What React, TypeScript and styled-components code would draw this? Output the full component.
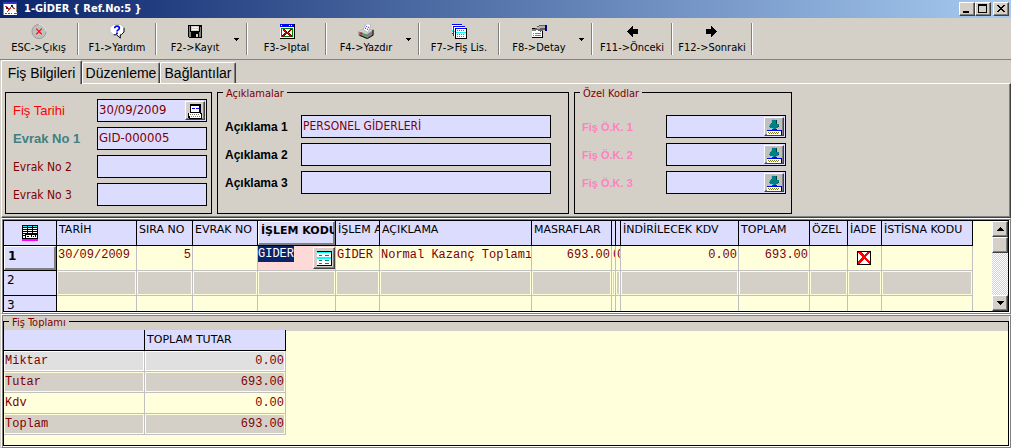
import React from "react";
import styled, { createGlobalStyle, css } from "styled-components";

const ui = '"DejaVu Sans Condensed", "DejaVu Sans", sans-serif';
const wide = '"DejaVu Sans", sans-serif';
const arial = '"Liberation Sans", sans-serif';
const mono = '"Liberation Mono", monospace';

const face = "#d4d0c8";
const lilac = "#dcdcff";
const cream = "#ffffdc";
const maroon = "#800000";

const GlobalStyle = createGlobalStyle`
  *, *::before, *::after { box-sizing: border-box; }
  body { margin: 0; background: ${face}; }
  button, input { margin: 0; padding: 0; border: 0; border-radius: 0; font: inherit; color: inherit; }
  table { border-collapse: separate; border-spacing: 0; table-layout: fixed; }
`;

const raised = css`
  background: ${face};
  border: 1px solid;
  border-color: #fff #404040 #404040 #fff;
  box-shadow: inset -1px -1px 0 #808080;
`;

const Window = styled.div`
  display: flex;
  flex-direction: column;
  min-height: 100vh;
  font: 11px/14px ${ui};
  color: #000;
`;

/* title bar */
const TitleBar = styled.header`
  display: flex;
  align-items: center;
  height: 18px;
  padding: 0 2px 0 3px;
  background: linear-gradient(90deg, #0a246a, #a6caf0);
`;
const Title = styled.h1`
  flex: 1;
  margin: 0 0 0 5px;
  color: #fff;
  font: bold 11px/16px ${ui};
  white-space: nowrap;
`;
const CaptionButton = styled.button<{ $apart?: boolean }>`
  ${raised}
  display: flex;
  width: 16px;
  height: 14px;
  margin-left: ${(p) => (p.$apart ? 2 : 0)}px;
`;

/* tool bar */
const ToolBar = styled.nav`
  display: flex;
  height: 42px;
  border-bottom: 1px solid #808080;
`;
const ToolGroup = styled.div`
  display: flex;
  height: 32px;
  margin-top: 5px;
  border-right: 1px solid #fff;
  box-shadow: inset -1px 0 0 #808080;
  padding-right: 1px;
`;
const ToolButton = styled.button<{ $w: number }>`
  display: flex;
  flex-direction: column;
  align-items: center;
  gap: 2px;
  width: ${(p) => p.$w}px;
  padding-top: 1px;
  background: none;
  white-space: nowrap;
`;
const DropButton = styled.button`
  display: flex;
  align-items: center;
  justify-content: flex-start;
  width: 13px;
  padding-left: 1px;
  background: none;
`;

/* tabs */
const TabList = styled.div`
  display: flex;
  align-items: flex-end;
  height: 23px;
  padding-left: 1px;
  font: 14px/18px ${arial};
`;
const Tab = styled.button<{ $active?: boolean; $w: number }>`
  position: relative;
  width: ${(p) => p.$w}px;
  height: ${(p) => (p.$active ? 24 : 21)}px;
  margin-bottom: ${(p) => (p.$active ? -1 : 0)}px;
  background: ${face};
  border: solid;
  border-width: 1px 1px 0 1px;
  border-color: #fff #404040 #fff #fff;
  border-radius: 2px 2px 0 0;
  box-shadow: inset -1px 0 0 #808080;
  white-space: nowrap;
  z-index: ${(p) => (p.$active ? 1 : 0)};
`;

const TabPage = styled.section`
  display: flex;
  gap: 5px;
  margin-left: 1px;
  padding: 8px 0 3px 3px;
  border: 1px solid;
  border-color: #fff #404040 #404040 #fff;
  box-shadow: inset -1px -1px 0 #808080;
`;
const Group = styled.fieldset<{ $w: number; $top: number }>`
  position: relative;
  display: flex;
  flex-direction: column;
  gap: 5px;
  width: ${(p) => p.$w}px;
  min-width: 0;
  margin: 0;
  padding: ${(p) => p.$top}px 5px 7px 7px;
  border: 1px solid #000;
`;
const Legend = styled.legend`
  position: absolute;
  top: -6px;
  left: 5px;
  padding: 0 3px;
  background: ${face};
  color: ${maroon};
`;
const Field = styled.div`
  display: flex;
  align-items: center;
`;
const FieldLabel = styled.label<{ $tone: string; $w: number; $arial?: boolean; $bold?: boolean; $size?: number }>`
  flex: none;
  width: ${(p) => p.$w}px;
  color: ${(p) => p.$tone};
  font: ${(p) => (p.$bold ? "bold " : "")}${(p) => p.$size || 12}px/16px ${(p) => (p.$arial ? arial : ui)};
  white-space: nowrap;
`;
const FieldBox = styled.div<{ $w: number }>`
  display: flex;
  width: ${(p) => p.$w}px;
  height: 23px;
  padding: 1px;
  background: ${lilac};
  border: 1px solid #000;
`;
const FieldInput = styled.input<{ $size?: number }>`
  flex: 1;
  min-width: 0;
  padding-bottom: 2px;
  background: none;
  color: ${maroon};
  font: ${(p) => p.$size || 13}px/16px ${ui};
  outline: none;
`;
const PickButton = styled.button<{ $grey?: boolean }>`
  ${raised}
  display: flex;
  align-items: center;
  justify-content: center;
  flex: none;
  width: 20px;
  height: 19px;
  ${(p) => p.$grey && "background: #c0c0c0;"}
`;

/* sunken frames round the grids */
const Frame = styled.section<{ $grow?: boolean }>`
  display: flex;
  flex-direction: column;
  flex: ${(p) => (p.$grow ? "1 0 auto" : "none")};
  margin-left: 1px;
  padding: 1px;
  border: 1px solid;
  border-color: #fff #808080 #808080 #fff;
  box-shadow: inset 1px 1px 0 #808080, inset -1px -1px 0 #fff;
`;
const GridView = styled.div`
  display: flex;
  justify-content: space-between;
  height: 92px;
  overflow: hidden;
  background: ${cream};
  border: 1px solid #000;
`;
const EntryTable = styled.table`
  flex: none;
  width: 969px;
  height: 100px;
  color: ${maroon};
  font: 12px/14px ${mono};
  td, th { padding: 0; height: 25px; overflow: hidden; vertical-align: top; text-align: left; font-weight: normal; white-space: nowrap; }
`;
const HeadCell = styled.th`
  background: ${lilac};
  color: #000;
  font: 11px/18px ${wide};
  border-right: 1px solid #000;
  border-bottom: 1px solid #000;
`;
const HeadText = styled.div<{ $active?: boolean }>`
  height: 24px;
  padding-left: 2px;
  overflow: hidden;
  ${(p) =>
    p.$active &&
    css`
      padding-left: 2px;
      font-weight: bold;
      border: 1px solid;
      border-color: #fff #808080 #808080 #fff;
      box-shadow: inset -1px -1px 0 #808080;
    `}
`;
const CornerMark = styled.div`
  display: flex;
  justify-content: center;
  padding-top: 4px;
`;
const RowHead = styled.th`
  background: ${lilac};
  color: #000;
  font: 12px/18px ${wide};
  border-right: 1px solid #000;
  border-bottom: 1px solid #000;
`;
const RowNumber = styled.div<{ $active?: boolean }>`
  height: 24px;
  padding-left: 3px;
  ${(p) =>
    p.$active &&
    css`
      font-weight: bold;
      border: 1px solid;
      border-color: #fff #808080 #808080 #fff;
      box-shadow: inset -1px -1px 0 #808080;
    `}
`;
const Cell = styled.td<{ $shade?: string; $edge?: string }>`
  border-right: 1px solid #c0c0c0;
  border-bottom: 1px solid #c0c0c0;
  ${(p) => p.$shade && `background: ${p.$shade}; box-shadow: inset 0 0 0 1px ${p.$edge || cream};`}
`;
const CellText = styled.div<{ $right?: boolean }>`
  padding: 2px 1px 0;
  overflow: hidden;
  text-align: ${(p) => (p.$right ? "right" : "left")};
`;
const EditCell = styled.div`
  display: flex;
  justify-content: space-between;
  height: 24px;
  background: #ffd8d8;
`;
const EditInput = styled.input`
  width: 36px;
  height: 16px;
  background: #0a246a;
  color: #fff;
  outline: none;
`;
const EditButton = styled.button`
  ${raised}
  display: flex;
  align-items: center;
  justify-content: center;
  width: 22px;
  height: 22px;
  margin-top: 1px;
`;
const CheckMark = styled.label`
  display: block;
  position: relative;
  width: 14px;
  height: 14px;
  margin: 5px 0 0 9px;
  input { position: absolute; inset: 0; width: 14px; height: 14px; appearance: none; background: #fff; border: 1px solid #000; }
  svg { position: absolute; inset: 0; pointer-events: none; }
`;

const ScrollBar = styled.div`
  display: flex;
  flex-direction: column;
  flex: none;
  width: 16px;
  background: repeating-conic-gradient(#fff 0 25%, ${face} 0 50%) 0 0 / 2px 2px;
`;
const ScrollButton = styled.button<{ $last?: boolean }>`
  ${raised}
  display: flex;
  align-items: center;
  justify-content: center;
  height: 16px;
  ${(p) => p.$last && "margin-top: auto;"}
`;

const TotalsGroup = styled.fieldset`
  position: relative;
  flex: 1;
  min-width: 0;
  margin: 5px 0 0;
  padding: 8px 0 0;
  background: linear-gradient(${face} 9px, ${cream} 9px);
  border: 1px solid #000;
`;
const TotalsTable = styled.table`
  width: 282px;
  color: ${maroon};
  font: 12px/14px ${mono};
  th, td { height: 21px; padding: 3px 1px 0 0; vertical-align: top; white-space: nowrap; }
  tbody th { text-align: left; font-weight: normal; padding-left: 1px; }
  td { text-align: right; }
  thead th { text-align: left; font: 11px/14px ${wide}; background: ${lilac}; color: #000; padding-left: 2px; border-right: 1px solid #000; border-bottom: 1px solid #000; }
`;

const Pix = ({ children, w = 16, h = 16 }: { children: React.ReactNode; w?: number; h?: number }) => (
  <svg width={w} height={h} viewBox={`0 0 ${w} ${h}`} shapeRendering="crispEdges" aria-hidden="true">
    {children}
  </svg>
);

const icons: Record<string, React.ReactNode> = {
  exit: (
    <svg width="16" height="16" viewBox="0 0 16 16" aria-hidden="true">
      <circle cx="8" cy="8" r="7.5" fill="#c0c0c0" stroke="#989898" />
      <path d="M8 .5A7.5 7.5 0 0 1 15.500 8" fill="none" stroke="#f4f4f4" />
      <path d="M5 5l6 6M11 5l-6 6" stroke="#f00" strokeWidth="1.200" />
    </svg>
  ),
  help: (
    <svg width="16" height="16" viewBox="0 0 16 16" aria-hidden="true">
      <path d="M4.500 .5h7l4 3v5l-3 3h-1v4l-4-4h-3l-4-3v-5z" fill="#fff" stroke="#c0c0c0" />
      <path d="M15.500 4v4.500l-3 3h-1v3.500l-4-3.500h-3" fill="none" stroke="#000" />
      <path d="M5.500 4.500c0-3 5-3 5 0 0 2-2.500 1.500-2.500 3.500" fill="none" stroke="#00f" strokeWidth="1.800" />
      <path d="M7 9h2v2H7z" fill="#00f" />
    </svg>
  ),
  save: (
    <Pix>
      <path d="M1 1h14v14H2l-1-1z" fill="#000" />
      <path d="M2 2h1v12H2zM13 3h1v11h-1zM3 8h10v1H3zM3 9h1v5H3zM12 9h1v5h-1z" fill="#808080" />
      <path d="M4 2h8v5H4z" fill="#d4d0c8" />
      <path d="M5 3h6v1H5zM5 5h6v1H5z" fill="#fff" />
      <path d="M9 11h2v3H9z" fill="#d4d0c8" />
    </Pix>
  ),
  cancel: (
    <Pix>
      <path d="M1 0h15v16H1z" fill="#000" />
      <path d="M1 0h14v15H1z" fill="#fff" />
      <path d="M1 0h14v3H1z" fill="#00f" />
      <path d="M10 1h1v1h-1zM12 1h1v1h-1zM2 1h1v1H2z" fill="#fff" />
      <path d="M2 4h12v1H2zM2 13h12v1H2zM2 5h1v8H2zM13 5h1v8h-1z" fill="#008000" />
      <path d="M4 5h2v1h1v1h1v1h1V7h1V6h1V5h2v1h-1v1h-1v1h-1v2h1v1h1v1h1v2h-2v-1h-1v-1H9v-1H7v1H6v1H5v1H3v-2h1v-1h1v-1h1V8H5V7H4z" fill="#800000" />
      <path d="M4 5h1v1H4zM5 6h1v1H5zM6 7h1v1H6zM7 8h1v1H7zM8 9h1v1H8zM9 10h1v1H9zM10 11h1v1h-1zM11 12h1v1h-1zM11 6h1v1h-1zM9 8h1v1H9zM6 10h1v1H6zM4 12h1v1H4z" fill="#f00" />
    </Pix>
  ),
  print: (
    <svg width="16" height="16" viewBox="0 0 16 16" aria-hidden="true">
      <path d="M0 8l7-4 9 3v5l-7 4-9-4z" fill="#808080" />
      <path d="M0 8l7-4 8 3-6 4z" fill="#d0d0d0" />
      <path d="M5 6l3-6h4l1 2-3 7z" fill="#fff" stroke="#888" strokeWidth=".5" />
      <path d="M8 2h1v1H8zM10 3h1v1h-1zM7 4h1v1H7zM9 5h1v1H9z" fill="#00f" />
      <path d="M15.500 6v6l-6 3.500L1 12" fill="none" stroke="#000" />
      <path d="M2 9h2v2H2z" fill="#f00" />
      <path d="M5 11h2v2H5z" fill="#0d0" />
    </svg>
  ),
  list: (
    <Pix>
      <path d="M0 0h11v11H0z" fill="#fff" />
      <path d="M0 0h11v1H0z" fill="#00f" />
      <path d="M0 1h1v10H0z" fill="#808080" />
      <path d="M2 2h12v11H2z" fill="#fff" />
      <path d="M2 2h12v1H2z" fill="#00f" />
      <path d="M2 3h1v10H2zM0 10h3v1H0z" fill="#404040" />
      <path d="M4 4h12v12H4z" fill="#000" />
      <path d="M5 5h10v10H5z" fill="#fff" />
      <path d="M5 4h10v1H5z" fill="#00f" />
      <path d="M0 6h2v2H0zM3 7h1v2H3zM5 8h10v2H5z" fill="#0ff" />
      <path d="M6 6h1v1H6zM8 6h1v1H8zM10 6h1v1h-1zM12 6h1v1h-1zM6 11h1v1H6zM8 11h1v1H8zM10 11h1v1h-1zM12 11h1v1h-1zM6 13h1v1H6zM8 13h1v1H8zM10 13h1v1h-1zM12 13h1v1h-1z" fill="#808000" />
    </Pix>
  ),
  detail: (
    <Pix>
      <path d="M0 4h12v11H0z" fill="#000" />
      <path d="M1 5h10v9H1z" fill="#fff" />
      <path d="M1 5h4v2H1z" fill="#808080" />
      <path d="M2 8h1v1H2zM4 8h6v1H4zM2 10h1v1H2zM4 10h6v1H4zM2 12h1v1H2zM4 12h6v1H4z" fill="#808080" />
      <path d="M4 4h2V2h2V1h6v5h-2v1h-2v2H9V7H7V6H4z" fill="#606060" />
      <path d="M6 3h2V2h6v2H9v1H6z" fill="#b0b0b0" />
      <path d="M14 1h2v6h-2z" fill="#000080" />
    </Pix>
  ),
  prev: (
    <Pix>
      <path d="M3 7h1V6h1V5h1V4h1V3h1V2h1v3h5v6H9v3H8v-1H7v-1H6v-1H5v-1H4V9H3z" fill="#000" />
    </Pix>
  ),
  next: (
    <Pix>
      <path d="M13 7h-1V6h-1V5h-1V4H9V3H8V2H7v3H2v6h5v3h1v-1h1v-1h1v-1h1v-1h1V9h1z" fill="#000" />
    </Pix>
  ),
};

const AppIcon = () => (
  <Pix>
    <path d="M0 1h14v13H0z" fill="#fff" />
    <path d="M0 1h14v2H0z" fill="#33c" />
    <path d="M0 3h1v11H0zM13 3h1v8h-1z" fill="#888" />
    <path d="M2 5l4 3M4 11l5-6M8 5l4 3" stroke="#d03030" fill="none" strokeWidth="1" />
    <path d="M3 6h2v2H3zM8 4h2v2H8z" fill="#222" />
    <path d="M2 12h2v1H2zM5 12h2v1H5zM8 12h1v1H8zM11 12h4v1h-4z" fill="#d0a" />
  </Pix>
);
const DateIcon = () => (
  <Pix>
    <path d="M3 1h11v9h1v6H2v-1H1v-5h2z" fill="#000" />
    <path d="M4 3h8v6H4z" fill="#fff" />
    <path d="M5 5h3v1H5zM9 5h3v1H9z" fill="#00f" />
    <path d="M2 10h11v1h1v4H3v-2H2z" fill="#fff" />
    <path d="M3 11h1v1H3zM5 11h1v1H5zM7 11h1v1H7zM9 11h1v1H9zM11 11h1v1h-1zM4 13h1v1H4zM6 13h1v1H6zM8 13h1v1H8zM10 13h1v1h-1zM12 13h1v1h-1z" fill="#808080" />
  </Pix>
);
const LookupIcon = () => (
  <Pix>
    <path d="M5 1h5v4h3v3h-1v1h-2v2H6V9H4V8H3V5h2z" fill="#008080" />
    <path d="M6 0h3v1H6zM5 1h1v3H5zM3 5h1v2H3zM6 9h1v1H6z" fill="#0ff" />
    <path d="M10 1h1v4h-1zM12 7h1v1h-1z" fill="#004040" />
    <path d="M1 11h5v-1h5v1h4v1H1z" fill="#00f" />
    <path d="M1 12h14v4H1z" fill="#fff" />
    <path d="M2 13h1v1H2zM4 13h1v1H4zM6 13h1v1H6zM8 13h1v1H8zM10 13h1v1h-1zM12 13h1v1h-1zM3 14h1v1H3zM5 14h1v1H5zM7 14h1v1H7zM9 14h1v1H9zM11 14h1v1h-1z" fill="#808000" />
    <path d="M15 11h1v5h-1z" fill="#000" />
  </Pix>
);
const CornerIcon = () => (
  <Pix>
    <path d="M0 0h16v14H0z" fill="#000" />
    <path d="M1 1h4v1H1zM6 1h4v1H6zM11 1h4v1h-4z" fill="#0ff" />
    <path d="M1 3h4v1H1zM6 3h4v1H6zM11 3h4v1h-4zM1 5h4v1H1zM6 5h4v1H6zM11 5h4v1h-4zM1 7h4v1H1zM6 7h4v1H6zM11 7h4v1h-4z" fill="#fff" />
    <path d="M1 9h2v1H1zM1 11h2v2H1zM4 10h11v3H4z" fill="#fff" />
    <path d="M5 11h2v1H5zM9 10h1v2H9zM11 11h1v1h-1zM13 10h1v2h-1z" fill="#000" />
    <path d="M0 14h16v2H0z" fill="#f0f" />
  </Pix>
);
const ListIcon = () => (
  <Pix>
    <path d="M1 1h15v15H1z" fill="#000" />
    <path d="M1 2h14v13H1z" fill="#fff" />
    <path d="M1 2h14v1H1zM1 7h14v2H1z" fill="#0ff" />
    <path d="M3 5h3v1H3zM9 5h4v1H9zM3 10h3v1H3zM9 10h4v1H9zM3 13h3v1H3zM9 13h4v1H9z" fill="#008080" />
  </Pix>
);
const Triangle = ({ up }: { up?: boolean }) => (
  <Pix w={7} h={4}>
    <path d={up ? "M3 0h1v1h1v1h1v1h1v1H0V3h1V2h1V1h1z" : "M0 0h7v1H6v1H5v1H4v1H3V3H2V2H1V1H0z"} fill="#000" />
  </Pix>
);

const tools: { icon: string; text: string; w: number; drop?: boolean }[] = [
  { icon: "exit", text: "ESC->Çıkış", w: 77 },
  { icon: "help", text: "F1->Yardım", w: 76 },
  { icon: "save", text: "F2->Kayıt", w: 76, drop: true },
  { icon: "cancel", text: "F3->Iptal", w: 77 },
  { icon: "print", text: "F4->Yazdır", w: 78, drop: true },
  { icon: "list", text: "F7->Fiş Lis.", w: 78 },
  { icon: "detail", text: "F8->Detay", w: 78, drop: true },
  { icon: "prev", text: "F11->Önceki", w: 78 },
  { icon: "next", text: "F12->Sonraki", w: 78 },
];

const columns: { title: string; w: number; value: string; right?: boolean }[] = [
  { title: "TARİH", w: 80, value: "30/09/2009" },
  { title: "SIRA NO", w: 56, value: "5", right: true },
  { title: "EVRAK NO", w: 65, value: "" },
  { title: "İŞLEM KODU", w: 78, value: "GIDER" },
  { title: "İŞLEM ADI", w: 44, value: "GİDER" },
  { title: "AÇIKLAMA", w: 152, value: "Normal Kazanç Toplamı" },
  { title: "MASRAFLAR", w: 80, value: "693.00", right: true },
  { title: "", w: 4, value: "0" },
  { title: "", w: 5, value: "0" },
  { title: "İNDİRİLECEK KDV", w: 118, value: "0.00", right: true },
  { title: "TOPLAM", w: 71, value: "693.00", right: true },
  { title: "ÖZEL", w: 38, value: "" },
  { title: "İADE", w: 34, value: "" },
  { title: "İSTİSNA KODU", w: 91, value: "" },
];

const totals = [
  { name: "Miktar", value: "0.00", shade: "#e0e0e0", edge: "#fff" },
  { name: "Tutar", value: "693.00", shade: face },
  { name: "Kdv", value: "0.00" },
  { name: "Toplam", value: "693.00", shade: face },
];

const renderValue = (c: (typeof columns)[number]) => {
  if (c.title === "İŞLEM KODU")
    return (
      <EditCell>
        <EditInput aria-label="İşlem kodu" defaultValue={c.value} />
        <EditButton aria-label="Liste"><ListIcon /></EditButton>
      </EditCell>
    );
  if (c.title === "İADE")
    return (
      <CheckMark>
        <input type="checkbox" aria-label="İade" />
        <Pix w={14} h={14}>
          <path d="M1 1h3l3 3 4-3h2L9 6l4 5v2h-1L7 8l-4 5H1v-2l4-5-4-4z" fill="#f00" />
        </Pix>
      </CheckMark>
    );
  return <CellText $right={c.right}>{c.value}</CellText>;
};

export default function App() {
  return (
    <Window>
      <GlobalStyle />
      <TitleBar>
        <AppIcon />
        <Title>{"1-GİDER { Ref.No:5 }"}</Title>
        <CaptionButton aria-label="Simge durumuna küçült">
          <Pix w={14} h={12}><path d="M3 8h6v2H3z" /></Pix>
        </CaptionButton>
        <CaptionButton aria-label="Ekranı kapla">
          <Pix w={14} h={12}><path d="M2 1h9v9H2zM3 3v6h7V3z" fillRule="evenodd" /></Pix>
        </CaptionButton>
        <CaptionButton $apart aria-label="Kapat">
          <Pix w={14} h={12}>
            <path d="M3 2h2v1h1v1h2V3h1V2h2v1h-1v1H9v1H8v1h1v1h1v1h1v1H9V8H8V7H6v1H5v1H3V8h1V7h1V6h1V5H5V4H4V3H3z" />
          </Pix>
        </CaptionButton>
      </TitleBar>

      <ToolBar>
        {tools.map((t) => (
          <ToolGroup key={t.text}>
            <ToolButton $w={t.w}>
              {icons[t.icon]}
              {t.text}
            </ToolButton>
            {t.drop && (
              <DropButton aria-label={`${t.text} seçenekleri`}>
                <Pix w={5} h={3}><path d="M0 0h5v1H4v1H3v1H2V2H1V1H0z" /></Pix>
              </DropButton>
            )}
          </ToolGroup>
        ))}
      </ToolBar>

      <TabList role="tablist">
        <Tab role="tab" aria-selected $active $w={81}>Fiş Bilgileri</Tab>
        <Tab role="tab" aria-selected={false} $w={78}>Düzenleme</Tab>
        <Tab role="tab" aria-selected={false} $w={76}>Bağlantılar</Tab>
      </TabList>

      <TabPage>
        <Group $w={207} $top={6}>
          <Field>
            <FieldLabel htmlFor="tarih" $tone="#f00" $w={84} $arial $size={13}>Fiş Tarihi</FieldLabel>
            <FieldBox $w={110}>
              <FieldInput id="tarih" defaultValue="30/09/2009" />
              <PickButton aria-label="Tarih seç"><DateIcon /></PickButton>
            </FieldBox>
          </Field>
          <Field>
            <FieldLabel htmlFor="evrak1" $tone="#408080" $w={84} $arial $bold $size={13}>Evrak No 1</FieldLabel>
            <FieldBox $w={110}><FieldInput id="evrak1" defaultValue="GID-000005" /></FieldBox>
          </Field>
          {[2, 3].map((n) => (
            <Field key={n}>
              <FieldLabel htmlFor={`evrak${n}`} $tone={maroon} $w={84}>Evrak No {n}</FieldLabel>
              <FieldBox $w={110}><FieldInput id={`evrak${n}`} /></FieldBox>
            </Field>
          ))}
        </Group>

        <Group $w={352} $top={22}>
          <Legend>Açıklamalar</Legend>
          {["PERSONEL GİDERLERİ", "", ""].map((v, i) => (
            <Field key={i}>
              <FieldLabel htmlFor={`aciklama${i}`} $tone="#000" $w={76} $arial $bold>Açıklama {i + 1}</FieldLabel>
              <FieldBox $w={250}><FieldInput id={`aciklama${i}`} $size={12} defaultValue={v} /></FieldBox>
            </Field>
          ))}
        </Group>

        <Group $w={218} $top={22}>
          <Legend>Özel Kodlar</Legend>
          {[1, 2, 3].map((n) => (
            <Field key={n}>
              <FieldLabel htmlFor={`ozel${n}`} $tone="#ff80c0" $w={84} $arial $bold $size={11}>Fiş Ö.K. {n}</FieldLabel>
              <FieldBox $w={120}>
                <FieldInput id={`ozel${n}`} />
                <PickButton $grey aria-label="Kod seç"><LookupIcon /></PickButton>
              </FieldBox>
            </Field>
          ))}
        </Group>
      </TabPage>

      <Frame>
        <GridView>
          <EntryTable>
            <colgroup>
              <col style={{ width: 53 }} />
              {columns.map((c, i) => <col key={i} style={{ width: c.w }} />)}
            </colgroup>
            <thead>
              <tr>
                <HeadCell><CornerMark><CornerIcon /></CornerMark></HeadCell>
                {columns.map((c, i) => (
                  <HeadCell key={i}><HeadText $active={c.title === "İŞLEM KODU"}>{c.title}</HeadText></HeadCell>
                ))}
              </tr>
            </thead>
            <tbody>
              {[1, 2, 3].map((n) => (
                <tr key={n}>
                  <RowHead><RowNumber $active={n === 1}>{n}</RowNumber></RowHead>
                  {columns.map((c, i) => (
                    <Cell key={i} $shade={n === 2 ? face : undefined}>{n === 1 && renderValue(c)}</Cell>
                  ))}
                </tr>
              ))}
            </tbody>
          </EntryTable>
          <ScrollBar>
            <ScrollButton aria-label="Yukarı"><Triangle up /></ScrollButton>
            <ScrollButton as="div" />
            <ScrollButton $last aria-label="Aşağı"><Triangle /></ScrollButton>
          </ScrollBar>
        </GridView>
      </Frame>

      <Frame $grow>
        <TotalsGroup>
          <Legend>Fiş Toplamı</Legend>
          <TotalsTable>
            <colgroup>
              <col style={{ width: 141 }} />
              <col style={{ width: 141 }} />
            </colgroup>
            <thead>
              <tr><th /><th>TOPLAM TUTAR</th></tr>
            </thead>
            <tbody>
              {totals.map((t) => (
                <tr key={t.name}>
                  <Cell as="th" $shade={t.shade} $edge={t.edge}>{t.name}</Cell>
                  <Cell $shade={t.shade} $edge={t.edge}>{t.value}</Cell>
                </tr>
              ))}
            </tbody>
          </TotalsTable>
        </TotalsGroup>
      </Frame>
    </Window>
  );
}
